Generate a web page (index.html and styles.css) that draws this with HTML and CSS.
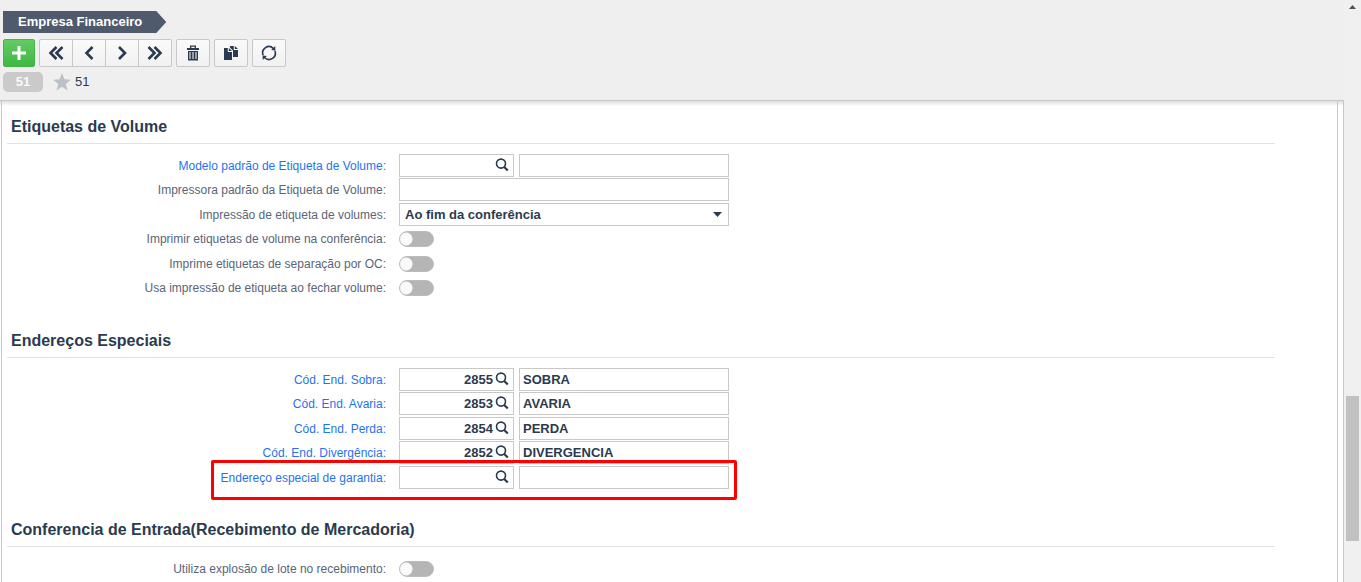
FILE: index.html
```html
<!DOCTYPE html>
<html lang="pt-BR">
<head>
<meta charset="utf-8">
<title>Empresa Financeiro</title>
<link rel="stylesheet" href="styles.css">
</head>
<body>
<svg class="defs" aria-hidden="true">
  <symbol id="search" viewBox="0 0 14 14"><circle cx="6" cy="5.6" r="4.5" fill="none" stroke="currentColor" stroke-width="1.6"/><path d="M9.2 9l3.6 3.5" stroke="currentColor" stroke-width="2.2"/></symbol>
</svg>
<div class="app">
  <div class="main">
    <header class="header">
      <h1 class="title">Empresa Financeiro</h1>
      <div class="toolbar">
        <button class="btn add" aria-label="Adicionar"><svg width="14" height="14" viewBox="0 0 14 14"><path d="M7 0v14M0 7h14" stroke="#fff" stroke-width="3"/></svg></button>
        <div class="group">
          <button class="btn" aria-label="Primeiro"><svg width="16" height="14" viewBox="0 0 16 14"><path d="M8.500 1l-6 6 6 6M14.500 1l-6 6 6 6"/></svg></button>
          <button class="btn" aria-label="Anterior"><svg width="16" height="14" viewBox="0 0 16 14"><path d="M11.500 1l-6 6 6 6"/></svg></button>
          <button class="btn" aria-label="Próximo"><svg width="16" height="14" viewBox="0 0 16 14"><path d="M5 1l6 6-6 6"/></svg></button>
          <button class="btn" aria-label="Último"><svg width="16" height="14" viewBox="0 0 16 14"><path d="M1.500 1l6 6-6 6M7.500 1l6 6-6 6"/></svg></button>
        </div>
        <button class="btn" aria-label="Excluir"><svg class="solid" width="14" height="16" viewBox="0 0 14 16"><path d="M4 3V.5h6V3h3v2H1V3zM5.300 3h3.400V1.700H5.300zM2 6h10v9.500H2z" fill-rule="evenodd"/><path d="M3.300 7h1.400v7H3.300zM6.300 7h1.400v7H6.300zM9.300 7h1.400v7H9.300z" fill="#c3c8ce"/></svg></button>
        <button class="btn" aria-label="Duplicar"><svg class="solid" width="16" height="16" viewBox="0 0 16 16"><path d="M1 3h3.800v4H9v8H1zM5.800 3L9 6H5.800zM7 1h3.800v4H15v7H10V5.500L7 2.700zM11.800 1L15 4h-3.200z"/></svg></button>
        <button class="btn" aria-label="Atualizar"><svg class="thin" width="16" height="16" viewBox="0 0 16 16"><path d="M2.200 10.200A6.200 6.200 0 0 1 12.400 3.500M13.800 5.800A6.200 6.200 0 0 1 3.600 12.500"/><path class="tip" d="M10.200 4.900l4-3.900.2 4.600zM5.800 11.100l-4 3.900-.2-4.600z"/></svg></button>
      </div>
      <div class="record">
        <span class="badge">51</span>
        <svg width="18" height="18" viewBox="0 0 18 18" aria-hidden="true"><path d="M9 0l2.400 6.300 6.400.4-5 4.200 1.800 6.600L9 13.800l-5.600 3.700 1.800-6.600-5-4.200 6.400-.4z" fill="#bcc0c8"/></svg>
        <span>51</span>
      </div>
    </header>
    <div class="panel">
      <main class="sheet">
        <section class="section">
          <h2>Etiquetas de Volume</h2>
          <div class="rows">
            <div class="row"><label class="link" for="modelo">Modelo padrão de Etiqueta de Volume:</label>
              <div class="fields"><div class="lookup"><input id="modelo" type="text"><button aria-label="Pesquisar"><svg><use href="#search"/></svg></button></div><input type="text" aria-label="Descrição do modelo"></div></div>
            <div class="row"><label for="impressora">Impressora padrão da Etiqueta de Volume:</label>
              <div class="fields"><input id="impressora" type="text"></div></div>
            <div class="row"><label for="impressao">Impressão de etiqueta de volumes:</label>
              <div class="fields select"><select id="impressao"><option>Ao fim da conferência</option></select><svg width="9" height="5" viewBox="0 0 9 5" aria-hidden="true"><path d="M0 0h9L4.500 5z" fill="#2b3b4f"/></svg></div></div>
            <div class="row"><label for="t1">Imprimir etiquetas de volume na conferência:</label><input id="t1" class="toggle" type="checkbox"></div>
            <div class="row"><label for="t2">Imprime etiquetas de separação por OC:</label><input id="t2" class="toggle" type="checkbox"></div>
            <div class="row"><label for="t3">Usa impressão de etiqueta ao fechar volume:</label><input id="t3" class="toggle" type="checkbox"></div>
          </div>
        </section>
        <section class="section">
          <h2>Endereços Especiais</h2>
          <div class="rows">
            <div class="row"><label class="link" for="sobra">Cód. End. Sobra:</label>
              <div class="fields"><div class="lookup"><input id="sobra" type="text" value="2855"><button aria-label="Pesquisar"><svg><use href="#search"/></svg></button></div><input type="text" aria-label="Descrição sobra" value="SOBRA"></div></div>
            <div class="row"><label class="link" for="avaria">Cód. End. Avaria:</label>
              <div class="fields"><div class="lookup"><input id="avaria" type="text" value="2853"><button aria-label="Pesquisar"><svg><use href="#search"/></svg></button></div><input type="text" aria-label="Descrição avaria" value="AVARIA"></div></div>
            <div class="row"><label class="link" for="perda">Cód. End. Perda:</label>
              <div class="fields"><div class="lookup"><input id="perda" type="text" value="2854"><button aria-label="Pesquisar"><svg><use href="#search"/></svg></button></div><input type="text" aria-label="Descrição perda" value="PERDA"></div></div>
            <div class="row"><label class="link" for="diverg">Cód. End. Divergência:</label>
              <div class="fields"><div class="lookup"><input id="diverg" type="text" value="2852"><button aria-label="Pesquisar"><svg><use href="#search"/></svg></button></div><input type="text" aria-label="Descrição divergência" value="DIVERGENCIA"></div></div>
            <div class="row marked"><label class="link" for="garantia">Endereço especial de garantia:</label>
              <div class="fields"><div class="lookup"><input id="garantia" type="text"><button aria-label="Pesquisar"><svg><use href="#search"/></svg></button></div><input type="text" aria-label="Descrição garantia"></div></div>
          </div>
        </section>
        <section class="section">
          <h2>Conferencia de Entrada(Recebimento de Mercadoria)</h2>
          <div class="rows">
            <div class="row"><label for="t4">Utiliza explosão de lote no recebimento:</label><input id="t4" class="toggle" type="checkbox"></div>
          </div>
        </section>
      </main>
    </div>
  </div>
  <div class="scrollbar" aria-hidden="true">
    <svg width="7" height="4" viewBox="0 0 7 4"><path d="M3.500 0L7 4H0z" fill="#505050"/></svg>
    <div class="thumb"></div>
  </div>
</div>
</body>
</html>
```

FILE: styles.css
```css
*, *::after { box-sizing: border-box; }

body {
  margin: 0;
  overflow: hidden;
  background: #efefef;
  color: #2b3b4f;
  font: 13px "Liberation Sans", Arial, sans-serif;
}

h1, h2 { margin: 0; }

svg { display: block; }

.defs { position: absolute; width: 0; height: 0; }

.app { display: flex; height: 100vh; }

.main {
  display: flex;
  flex: 1;
  flex-direction: column;
  min-width: 0;
}

.header {
  display: flex;
  flex-direction: column;
  align-items: flex-start;
  padding: 11px 3px 8px;
}

.title {
  padding: 0 24px 0 15px;
  background: #4f5a6c;
  clip-path: polygon(0 0, calc(100% - 10px) 0, 100% 50%, calc(100% - 10px) 100%, 0 100%);
  color: #fff;
  font-size: 13px;
  line-height: 22px;
}

.toolbar { display: flex; gap: 4px; margin-top: 6px; }

.btn {
  display: flex;
  align-items: center;
  justify-content: center;
  width: 34px;
  height: 28px;
  padding: 0;
  border: 1px solid #c8c8c8;
  border-radius: 2px;
  background: linear-gradient(#fafafa, #f1f1f1);
  fill: none;
  stroke: #2b3b4f;
  stroke-width: 2.6;
}

.btn .solid { fill: #2b3b4f; stroke: none; }
.btn .thin { stroke-width: 1.6; }
.btn .tip { fill: #2b3b4f; stroke: none; }

.add {
  width: 32px;
  border-color: #45b549;
  background: linear-gradient(#63cb65, #3fb843);
}

.group { display: flex; }
.group .btn { border-radius: 0; }
.group .btn + .btn { margin-left: -1px; }
.group .btn:first-child { border-radius: 2px 0 0 2px; }
.group .btn:last-child { border-radius: 0 2px 2px 0; }

.record {
  display: flex;
  align-items: center;
  margin-top: 5px;
  line-height: 20px;
}

.record svg { margin: 0 4px 0 10px; }

.badge {
  width: 40px;
  border-radius: 5px;
  background: #cacaca;
  color: #fafafa;
  font-weight: bold;
  text-align: center;
}

.panel {
  flex: 1;
  min-height: 0;
  padding: 0 5px 0 1px;
  border: 1px solid #c8c8c8;
  border-width: 1px 1px 0 0;
  background: linear-gradient(#dedede, #fff 5px);
}

.sheet {
  height: 100%;
  overflow: hidden;
  padding: 13px 62px 0 5px;
  border: 1px solid #c8c8c8;
  border-width: 0 1px;
}

.section { margin-bottom: 27px; }

.section h2 {
  margin-bottom: 10px;
  padding: 0 4px 3px;
  border-bottom: 1px solid #e2e2e2;
  font-size: 16px;
  line-height: 26px;
}

.row {
  display: grid;
  grid-template-columns: 379px 330px;
  column-gap: 13px;
  align-items: start;
  height: 24px;
}

.row:nth-child(even) { height: 25px; }

.row label {
  color: #5a6577;
  font-size: 12px;
  line-height: 24px;
  text-align: right;
}

.row .link { color: #1f73ee; }

.fields { display: flex; gap: 5px; }

.fields input,
.fields select {
  flex: 1;
  width: 100%;
  min-width: 0;
  height: 23px;
  padding: 0 3px;
  border: 1px solid #c8c8c8;
  border-radius: 0;
  background: #fff;
  color: #2b3b4f;
  font: bold 13px "Liberation Sans", Arial, sans-serif;
}

.fields select { padding-left: 5px; appearance: none; }

.select { position: relative; }

.select svg {
  position: absolute;
  top: 9px;
  right: 7px;
  pointer-events: none;
}

.fields .lookup { position: relative; display: flex; width: 115px; }

.fields .lookup input { padding-right: 20px; text-align: right; }

.lookup button {
  position: absolute;
  top: 4px;
  right: 5px;
  padding: 0;
  border: 0;
  background: none;
  color: #2b3b4f;
}

.lookup svg { width: 14px; height: 14px; }

.toggle {
  width: 35px;
  height: 16px;
  margin: 4px 0;
  border: 1px solid #bcbcbc;
  border-radius: 8px;
  appearance: none;
  background: radial-gradient(circle at 6px 50%, #fafafa 6px, #b5b5b5 7px);
}

.marked { position: relative; }

.marked::after {
  content: "";
  position: absolute;
  top: -6px;
  left: 204px;
  width: 526px;
  height: 40px;
  border: 3px solid #f00;
  border-radius: 2px;
  pointer-events: none;
}

.scrollbar {
  display: grid;
  grid-template-rows: 396fr 145fr 41fr;
  justify-items: center;
  width: 17px;
  background: #f0f0f0;
}

.scrollbar svg { margin-top: 5px; }

.thumb { width: 13px; background: #c1c1c1; }
```
